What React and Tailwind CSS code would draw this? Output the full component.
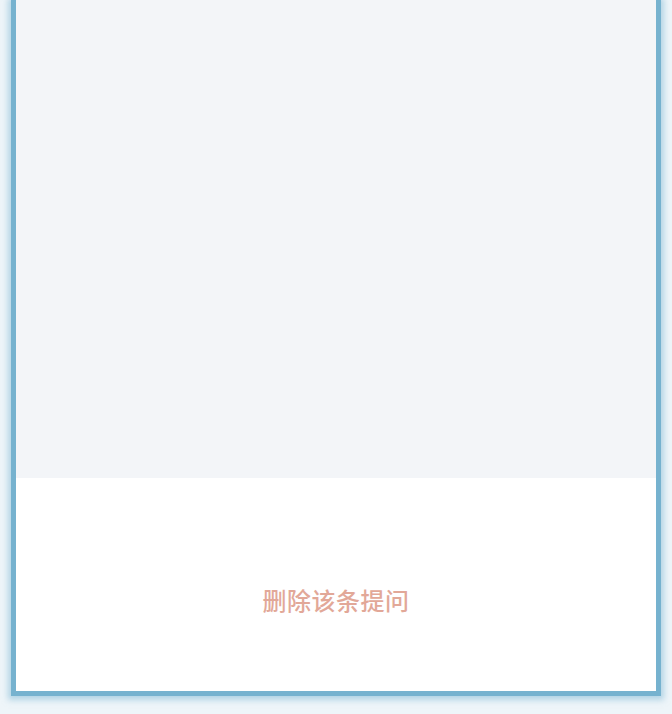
export default function App() {
  return (
    <div className="w-[672px] h-[714px] bg-[#eef5f9] overflow-hidden">
      <div className="ml-[11px] mr-[11px] h-[696px] border-x-[5px] border-b-[5px] border-[#76b2cf] shadow-[0_1px_6px_3px_rgba(120,180,210,0.5)] flex flex-col">
        <div className="h-[478px] bg-[#f3f5f8]" />
        <div className="flex-1 bg-white flex items-start justify-center pt-[106px]">
          <span
            className="text-[24px] leading-[32px] font-medium text-[#e2a898] tracking-[0.5px]"
            style={{ fontFamily: '"Noto Sans CJK SC", "Noto Sans", sans-serif' }}
          >
            删除该条提问
          </span>
        </div>
      </div>
    </div>
  );
}
